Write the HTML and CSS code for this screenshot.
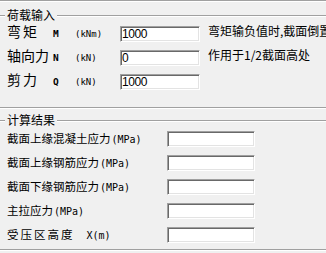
FILE: index.html
```html
<!DOCTYPE html>
<html lang="zh-CN">
<head>
  <meta charset="UTF-8">
  <title>荷载输入</title>
  <link rel="stylesheet" href="styles.css">
</head>
<body>
  <div class="top-rule"></div>

  <!-- 荷载输入 -->
  <div class="group group-load">
    <div class="group-title"><span>荷载输入</span></div>

    <div class="row">
      <div class="label"><span class="name wide">弯矩</span><span class="sym">M</span><span class="unit">(kNm)</span></div>
      <input class="field" type="text" value="1000">
      <span class="note">弯矩输负值时,截面倒置</span>
    </div>

    <div class="row">
      <div class="label"><span class="name">轴向力</span><span class="sym">N</span><span class="unit">(kN)</span></div>
      <input class="field" type="text" value="0">
      <span class="note">作用于1/2截面高处</span>
    </div>

    <div class="row">
      <div class="label"><span class="name wide">剪力</span><span class="sym">Q</span><span class="unit">(kN)</span></div>
      <input class="field" type="text" value="1000">
    </div>
  </div>

  <!-- 计算结果 -->
  <div class="group group-result">
    <div class="group-title"><span>计算结果</span></div>

    <div class="row">
      <div class="label">截面上缘混凝土应力<span class="unit">(MPa)</span></div>
      <input class="field" type="text">
    </div>
    <div class="row">
      <div class="label">截面上缘钢筋应力<span class="unit">(MPa)</span></div>
      <input class="field" type="text">
    </div>
    <div class="row">
      <div class="label">截面下缘钢筋应力<span class="unit">(MPa)</span></div>
      <input class="field" type="text">
    </div>
    <div class="row">
      <div class="label">主拉应力<span class="unit">(MPa)</span></div>
      <input class="field" type="text">
    </div>
    <div class="row">
      <div class="label"><span class="spaced">受压区高度</span><span class="unit x">X(m)</span></div>
      <input class="field" type="text">
    </div>
  </div>
</body>
</html>
```

FILE: styles.css
```css
/* Общий фон окна */
body {
  margin: 0;
  width: 326px;
  height: 253px;
  overflow: hidden;
  background-color: #f0f0f0;
  color: #000;
  font-family: "Noto Sans CJK SC", sans-serif;
  font-size: 12px;
}

.top-rule {
  height: 0;
  border-top: 1px solid #a0a0a0;
  border-bottom: 1px solid #fff;
}

/* Рамка группы */
.group {
  border-bottom: 1px solid #a0a0a0;
  box-shadow: 0 1px 0 #fff;
}

.group-load {
  margin-top: 6px;
  padding-bottom: 17px;
}

.group-result {
  margin-top: 5px;
  padding-bottom: 6px;
}

.group-title {
  display: flex;
  height: 14px;
  line-height: 14px;
  font-size: 12px;
}

.group-title::before,
.group-title::after {
  content: "";
  align-self: flex-start;
  margin-top: 7px;
  border-top: 1px solid #a0a0a0;
  box-shadow: 0 1px 0 #fff;
}

.group-title::before {
  width: 5px;
}

.group-title::after {
  flex: 1;
}

.group-title span {
  padding: 0 2px;
}

/* Строки */
.row {
  display: flex;
  align-items: flex-start;
  padding-left: 7px;
  white-space: nowrap;
}

.row > * {
  flex-shrink: 0;
}

.group-load .row {
  height: 19px;
  margin-top: 5px;
}

.group-load .row:nth-child(2) {
  margin-top: 1px;
}

.group-result .row {
  height: 16px;
  margin-top: 8px;
}

.group-result .row:nth-child(2) {
  margin-top: 4px;
}

.group-load .label {
  width: 113px;
  font-size: 14px;
  line-height: 16px;
}

.group-result .label {
  width: 160px;
  font-size: 11.5px;
  line-height: 14px;
}

.name {
  display: inline-block;
  width: 46px;
}

.name.wide {
  letter-spacing: 2px;
}

.sym {
  display: inline-block;
  width: 22px;
  font-family: "DejaVu Sans Mono", monospace;
  font-size: 9.5px;
  font-weight: bold;
}

.unit {
  font-family: "DejaVu Sans Mono", monospace;
  font-size: 9px;
}

.group-result .unit {
  margin-left: 1px;
  font-size: 10px;
}

.spaced {
  letter-spacing: 2px;
}

.unit.x {
  margin-left: 12px;
}

/* Поле ввода в классическом стиле */
.field {
  box-sizing: border-box;
  height: 16px;
  margin: 0;
  padding: 0 0 0 1px;
  border: 1px solid;
  border-color: #a0a0a0 #fff #fff #a0a0a0;
  box-shadow: inset 1px 1px 0 #696969, inset -1px -1px 0 #e3e3e3;
  background-color: #fff;
  font-family: "Liberation Sans", Arial, sans-serif;
  font-size: 12px;
  line-height: 14px;
  letter-spacing: -0.4px;
  color: #000;
  outline: none;
}

.group-load .field {
  width: 80px;
  margin-top: 3px;
}

.group-result .field {
  width: 88px;
}

.note {
  margin-left: 8px;
  margin-top: 1px;
  line-height: 14px;
}
```
